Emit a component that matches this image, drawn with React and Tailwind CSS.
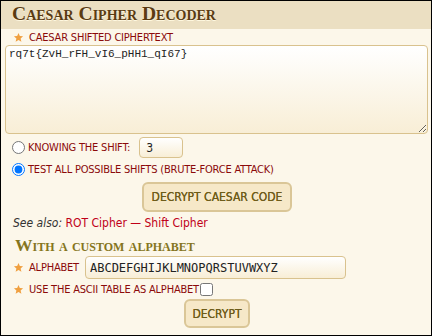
import React from 'react';

const Star = () => (
  <svg width="11" height="11" viewBox="0 0 24 24" className="shrink-0">
    <path d="M12 2l2.9 6.9 7.1.6-5.4 4.7 1.7 7.3L12 17.6 5.7 21.5l1.7-7.3L2 9.5l7.1-.6z" fill="#f0a040" />
  </svg>
);

const labelCls = "text-[11px] text-[#8b0a0a] uppercase leading-none tracking-[-0.2px]";
const fieldCls = "border border-[#d9c28e] rounded-[4px] bg-gradient-to-b from-white to-[#f8eed6] text-[#222] outline-none";
const btnCls = "border-2 border-[#dac697] rounded-[6px] bg-[#f6e8c8] text-[12px] font-normal text-[#6e5c1a] uppercase [text-shadow:0_0_0.4px_#6e5c1a]";

export default function App() {
  return (
    <div className="w-[432px] h-[336px] overflow-hidden border border-black bg-[#fcf7ea] font-['DejaVu_Sans_Condensed','Liberation_Sans',sans-serif]">
      <div className="h-[28px] bg-[#ebdfc2] pl-[11px] pt-[3px]">
        <h1 className="font-['Liberation_Serif',serif] font-bold text-[19.6px] leading-[20px] text-[#5a3b12] [font-variant:small-caps] [text-shadow:0_1px_0_#fff8e0]">
          Caesar Cipher Decoder
        </h1>
      </div>

      <div className="px-[4px]">
        <div className="flex items-center gap-[5px] pl-[8px] pt-[2px] h-[15px]">
          <Star />
          <span className={labelCls}>Caesar shifted ciphertext</span>
        </div>
        <textarea
          readOnly
          spellCheck={false}
          value="rq7t{ZvH_rFH_vI6_pHH1_qI67}"
          className={`block w-[423px] h-[89px] mt-[1px] px-[3px] py-0 font-['Liberation_Mono',monospace] text-[11px] ${fieldCls}`}
        />

        <div className="flex items-center pl-[7px] mt-[3px] h-[21px]">
          <input type="radio" name="m" className="w-[13px] h-[13px] m-0" />
          <span className={`${labelCls} ml-[3px]`}>Knowing the shift:</span>
          <input
            readOnly
            value="3"
            className={`ml-[9px] w-[44px] h-[21px] px-[6px] text-[12px] ${fieldCls}`}
          />
        </div>

        <div className="flex items-center pl-[7px] mt-[1px] h-[20px]">
          <input type="radio" name="m" defaultChecked className="w-[13px] h-[13px] m-0" />
          <span className={`${labelCls} ml-[3px]`}>Test all possible shifts (brute-force attack)</span>
        </div>

        <div className="flex justify-center mt-[3px] pl-[2px]">
          <button className={`h-[30px] px-[8px] ${btnCls}`}>
            Decrypt Caesar code
          </button>
        </div>

        <p className="pl-[8px] mt-[2px] text-[12px] leading-[18px]">
          <i className="text-[#333]">See also:</i>{' '}
          <a className="text-[#c00018]">ROT Cipher</a>
          <span className="text-[#c00018]"> — </span>
          <a className="text-[#c00018]">Shift Cipher</a>
        </p>

        <h2 className="pl-[10px] mt-[5px] font-['Liberation_Serif',serif] font-bold text-[17.5px] leading-[16px] text-[#857520] [font-variant:small-caps]">
          With a custom alphabet
        </h2>

        <div className="flex items-center gap-[5px] pl-[8px] mt-[3px] h-[23px]">
          <Star />
          <span className={labelCls}>Alphabet</span>
          <input
            readOnly
            value="ABCDEFGHIJKLMNOPQRSTUVWXYZ"
            className={`ml-[1px] w-[261px] h-[23px] px-[4px] font-['DejaVu_Sans_Mono',monospace] text-[12px] ${fieldCls}`}
          />
        </div>

        <div className="flex items-center gap-[5px] pl-[8px] h-[20px]">
          <Star />
          <span className={labelCls}>Use the ASCII table as alphabet</span>
          <input type="checkbox" className="w-[13px] h-[13px] m-0 -ml-[4px]" />
        </div>

        <div className="flex justify-center mt-[0px] pl-[2px]">
          <button className={`h-[29px] px-[6px] ${btnCls}`}>
            Decrypt
          </button>
        </div>
      </div>
    </div>
  );
}
